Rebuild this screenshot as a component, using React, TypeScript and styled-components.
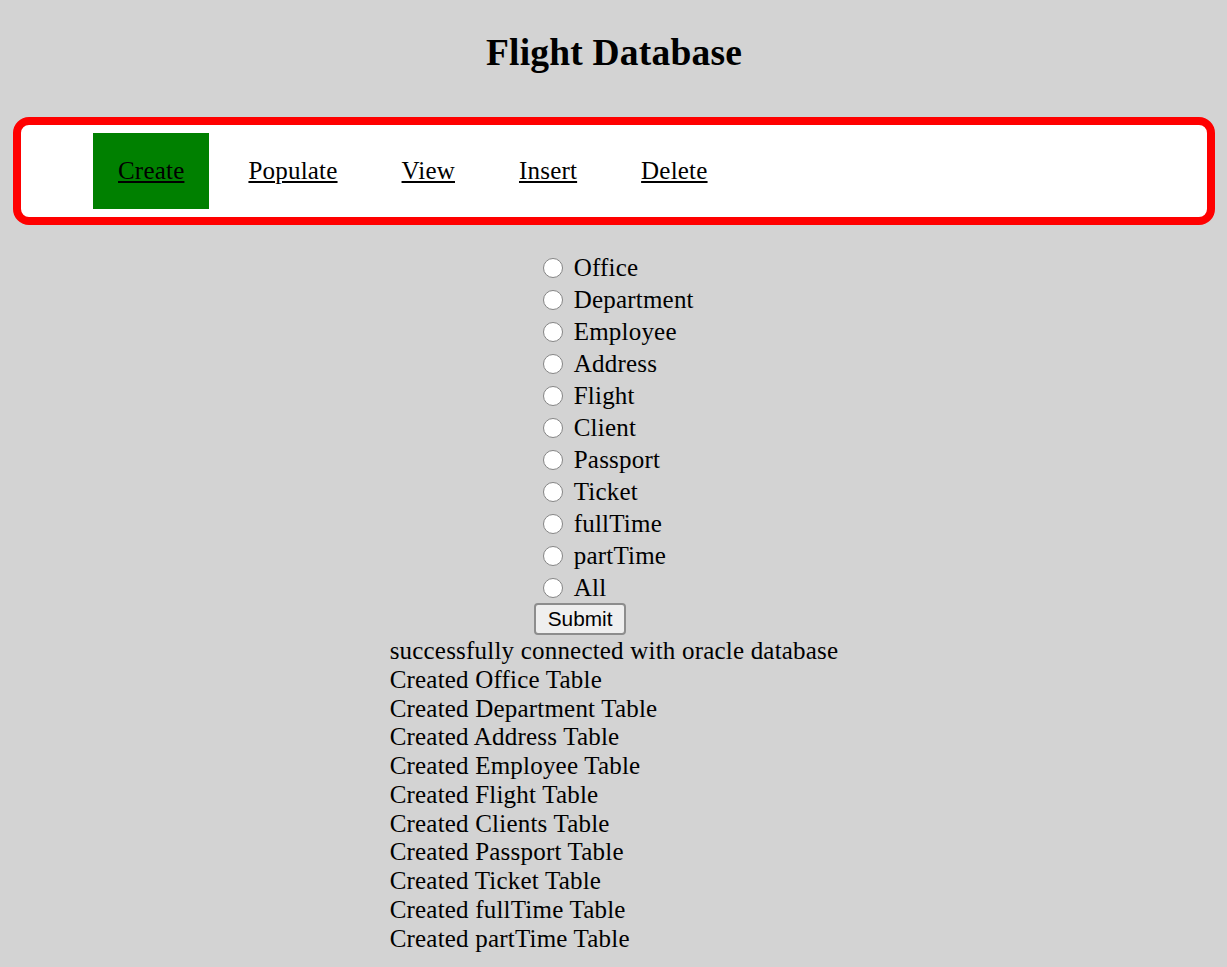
import React from "react";
import styled, { createGlobalStyle } from "styled-components";

const GlobalStyle = createGlobalStyle`
  html, body {
    margin: 0;
    padding: 0;
    background: #d3d3d3;
  }
  body {
    font-family: "Liberation Serif", "Times New Roman", serif;
    font-size: 25px;
    color: #000;
    letter-spacing: 0.2px;
  }
`;

const Page = styled.div`
  display: flex;
  flex-direction: column;
  align-items: stretch;
  padding: 0 12px 0 13px;
  min-height: 967px;
  box-sizing: border-box;
`;

const Title = styled.h2`
  margin: 31px 0 43px;
  font-size: 37.5px;
  font-weight: bold;
  text-align: center;
  line-height: normal;
`;

const Nav = styled.nav`
  border: 8px solid #ff0000;
  border-radius: 16px;
  background: #ffffff;
  padding: 8px 8px 8px 72px;
  margin-bottom: 26px;
`;

const NavList = styled.ul`
  display: flex;
  gap: 14px;
  list-style: none;
  margin: 0;
  padding: 0;
`;

const NavItem = styled.li<{ $active?: boolean }>`
  background: ${(p) => (p.$active ? "#008000" : "transparent")};
`;

const NavLink = styled.a`
  display: block;
  padding: 0 25px;
  height: 76px;
  line-height: 76px;
  color: #000;
  text-decoration: underline;
  font-size: 25px;
`;

const Content = styled.div`
  display: flex;
  flex-direction: column;
  align-items: center;
`;

const Form = styled.form`
  display: flex;
  flex-direction: column;
  align-items: flex-start;
`;

const Row = styled.label`
  display: flex;
  align-items: flex-start;
  height: 32px;
`;

const Radio = styled.input`
  appearance: none;
  -webkit-appearance: none;
  box-sizing: border-box;
  width: 20px;
  height: 20px;
  margin: 7px 11px 0 8.5px;
  border: 1.5px solid #858585;
  border-radius: 50%;
  background: #fff;
`;

const RowText = styled.span`
  line-height: 32px;
  padding-top: 1px;
  font-size: 25px;
`;

const SubmitButton = styled.button`
  font-family: "Liberation Sans", Arial, sans-serif;
  font-size: 20.8px;
  letter-spacing: 0;
  line-height: normal;
  height: 32px;
  padding: 0 11.5px;
  background: #efefef;
  color: #000;
  border: 2px solid #8d8d8d;
  border-radius: 4px;
`;

const Log = styled.div`
  display: flex;
  flex-direction: column;
  align-items: flex-start;
  margin-top: 2px;
`;

const LogLine = styled.div`
  font-size: 25px;
  line-height: 28.75px;
  white-space: nowrap;
`;

const tabs = ["Create", "Populate", "View", "Insert", "Delete"];
const options = [
  "Office",
  "Department",
  "Employee",
  "Address",
  "Flight",
  "Client",
  "Passport",
  "Ticket",
  "fullTime",
  "partTime",
  "All",
];
const logs = [
  "successfully connected with oracle database",
  "Created Office Table",
  "Created Department Table",
  "Created Address Table",
  "Created Employee Table",
  "Created Flight Table",
  "Created Clients Table",
  "Created Passport Table",
  "Created Ticket Table",
  "Created fullTime Table",
  "Created partTime Table",
];

export default function App() {
  return (
    <>
      <GlobalStyle />
      <Page>
        <Title>Flight Database</Title>
        <Nav>
          <NavList>
            {tabs.map((t) => (
              <NavItem key={t} $active={t === "Create"}>
                <NavLink href="#">{t}</NavLink>
              </NavItem>
            ))}
          </NavList>
        </Nav>
        <Content>
          <Form onSubmit={(e) => e.preventDefault()}>
            {options.map((o) => (
              <Row key={o}>
                <Radio type="radio" name="table" value={o} />
                <RowText>{o}</RowText>
              </Row>
            ))}
            <SubmitButton type="submit">Submit</SubmitButton>
          </Form>
          <Log>
            {logs.map((l) => (
              <LogLine key={l}>{l}</LogLine>
            ))}
          </Log>
        </Content>
      </Page>
    </>
  );
}
